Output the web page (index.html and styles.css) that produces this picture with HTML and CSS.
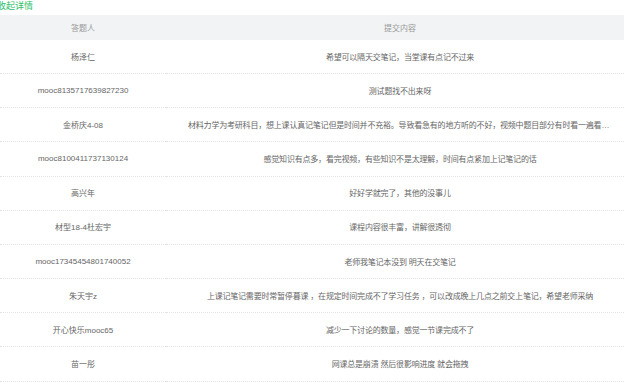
FILE: index.html
```html
<!DOCTYPE html>
<html lang="zh-CN">
<head>
    <title>收起详情</title>
    <meta charset="UTF-8">
    <meta name="viewport" content="width=device-width, initial-scale=1"/>
    <link rel="stylesheet" href="styles.css">
</head>
<body>
<div class="panel">
    <a class="toggle" href="#">收起详情</a>
    <table class="answers">
        <colgroup>
            <col class="col-name">
            <col class="col-content">
        </colgroup>
        <thead>
        <tr>
            <th>答题人</th>
            <th>提交内容</th>
        </tr>
        </thead>
        <tbody>
        <tr>
            <td>杨泽仁</td>
            <td><div class="content">希望可以隔天交笔记，当堂课有点记不过来</div></td>
        </tr>
        <tr>
            <td>mooc8135717639827230</td>
            <td><div class="content">测试题找不出来呀</div></td>
        </tr>
        <tr>
            <td>金桥庆4-08</td>
            <td><div class="content">材料力学为考研科目，想上课认真记笔记但是时间并不充裕。导致看急有的地方听的不好，视频中题目部分有时看一遍看一遍还是不太明白</div></td>
        </tr>
        <tr>
            <td>mooc8100411737130124</td>
            <td><div class="content">感觉知识有点多，看完视频，有些知识不是太理解，时间有点紧加上记笔记的话</div></td>
        </tr>
        <tr>
            <td>高兴年</td>
            <td><div class="content">好好学就完了，其他的没事儿</div></td>
        </tr>
        <tr>
            <td>材型18-4杜宏宇</td>
            <td><div class="content">课程内容很丰富，讲解很透彻</div></td>
        </tr>
        <tr>
            <td>mooc17345454801740052</td>
            <td><div class="content">老师我笔记本没到 明天在交笔记</div></td>
        </tr>
        <tr>
            <td>朱天宇z</td>
            <td><div class="content">上课记笔记需要时常暂停暮课 ，在规定时间完成不了学习任务 ，可以改成晚上几点之前交上笔记，希望老师采纳</div></td>
        </tr>
        <tr>
            <td>开心快乐mooc65</td>
            <td><div class="content">减少一下讨论的数量，感觉一节课完成不了</div></td>
        </tr>
        <tr>
            <td>苗一彤</td>
            <td><div class="content">网课总是崩溃 然后很影响进度 就会拖拽</div></td>
        </tr>
        </tbody>
    </table>
</div>
</body>
</html>
```

FILE: styles.css
```css
body {
    margin: 0;
    background-color: #ffffff;
    overflow: hidden;
    font-family: 'Liberation Sans', 'Noto Sans CJK SC', sans-serif;
    font-size: 8px;
    color: #666666;
}

.panel {
    width: 634px;
}

.toggle {
    display: block;
    margin-left: -3px;
    height: 15px;
    line-height: 13px;
    font-size: 9px;
    color: #2fbf6a;
    text-decoration: none;
}

.answers {
    width: 634px;
    border-collapse: collapse;
    table-layout: fixed;
}
.answers .col-name {
    width: 166px;
}
.answers th {
    height: 25px;
    padding: 0;
    background-color: #f1f3f4;
    color: #999999;
    font-weight: normal;
    text-align: center;
}
.answers td {
    height: 32.16px;
    padding: 0 0 1px;
    text-align: center;
    border-bottom: 1px dotted #e3e3e3;
    white-space: nowrap;
}
.answers .content {
    width: 424px;
    margin: 0 auto;
    overflow: hidden;
    text-overflow: ellipsis;
    white-space: nowrap;
    letter-spacing: -0.2px;
}
```
